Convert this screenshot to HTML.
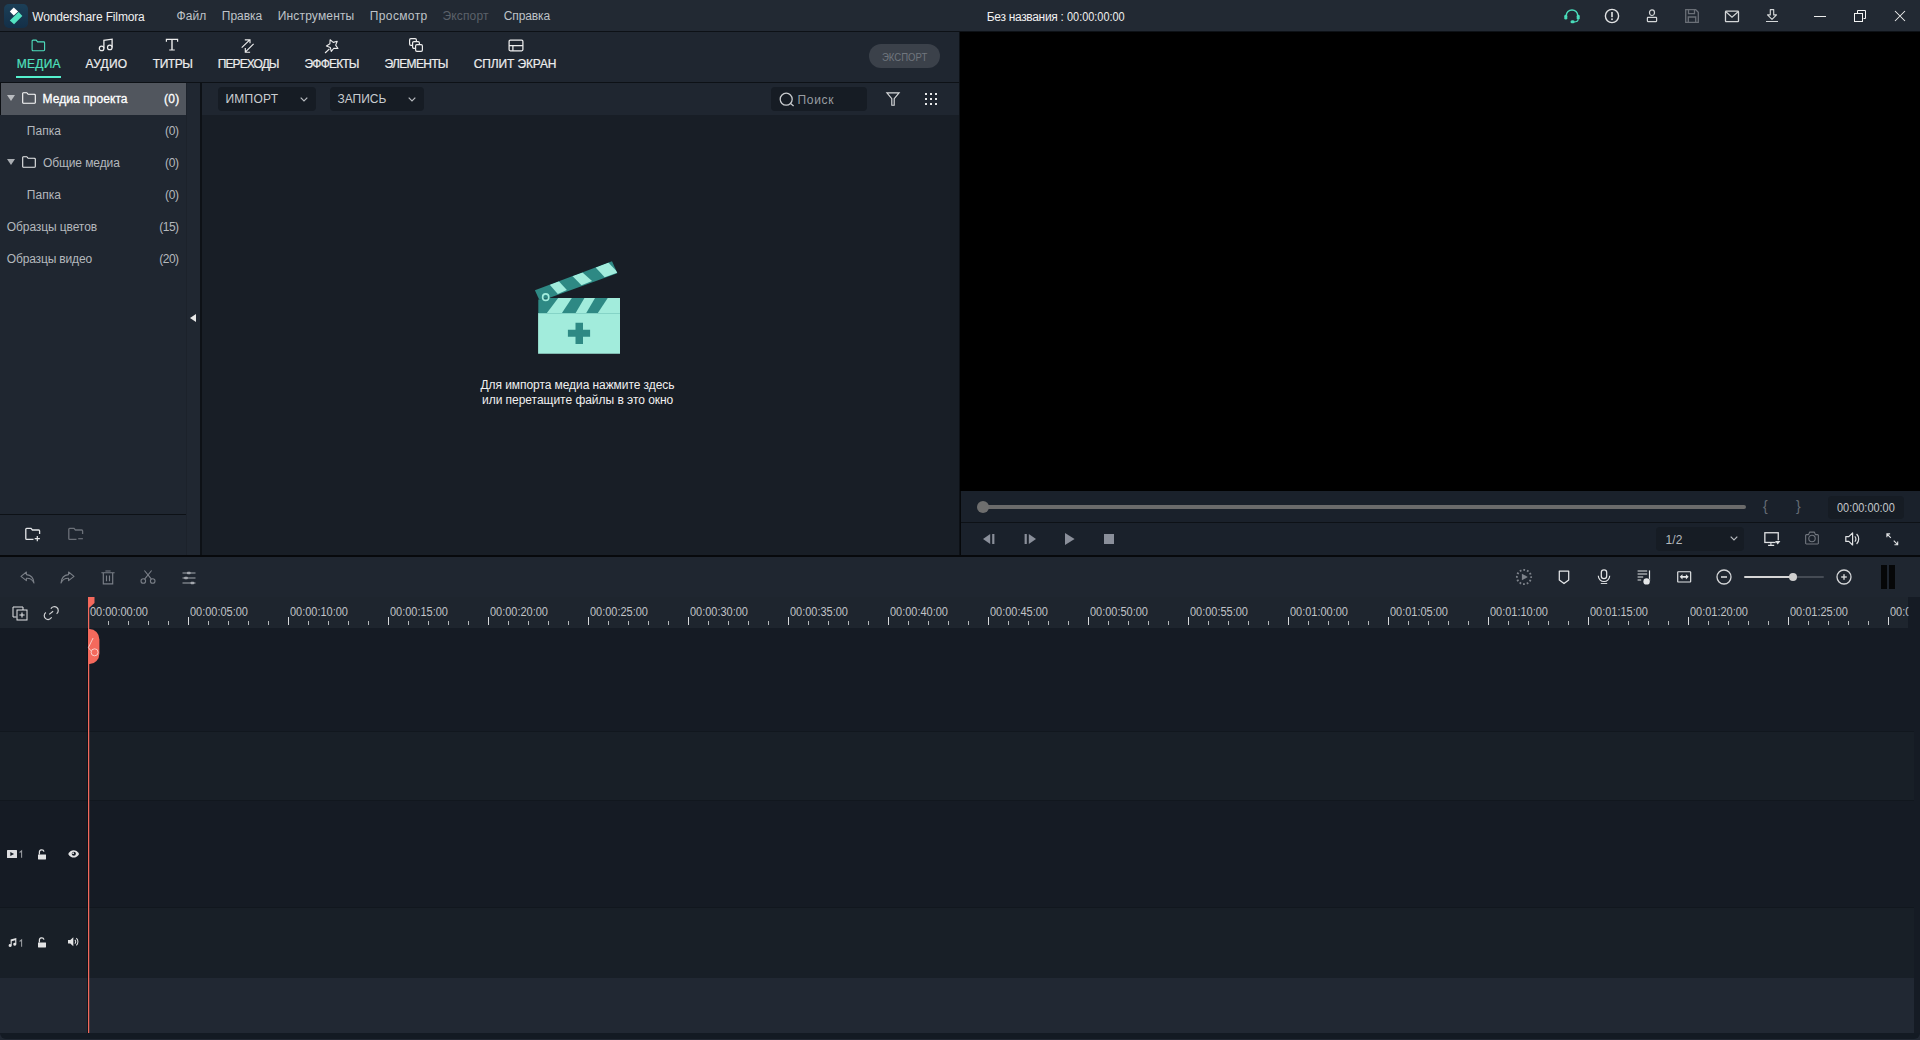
<!DOCTYPE html>
<html><head><meta charset="utf-8"><title>Wondershare Filmora</title>
<style>
html,body{margin:0;padding:0;}
body{width:1920px;height:1040px;overflow:hidden;position:relative;background:#1f2630;font-family:"Liberation Sans",sans-serif;}
.b{position:absolute;}
.ic{position:absolute;overflow:visible;}
.t{position:absolute;white-space:nowrap;line-height:16px;height:16px;}
</style></head><body>
<div class="b" style="left:0px;top:0px;width:1920px;height:31px;background:#222933;"></div>
<div class="b" style="left:0px;top:31px;width:1920px;height:1px;background:#0d1116;"></div>
<svg class="ic" style="left:4px;top:4px" width="24" height="24" viewBox="0 0 24 24"><defs><linearGradient id="lg" x1="0" y1="0" x2="0" y2="1"><stop offset="0" stop-color="#1c3f57"/><stop offset="1" stop-color="#132f48"/></linearGradient></defs><rect width="24" height="24" rx="4.800" fill="url(#lg)"/><path d="M9.750 3.600l4.400 3.800-4.400 4.200-3.950-4.200z" fill="#ffffff"/><path d="M14.600 8l3.750 3.900-8.300 8.300-4.250-3.700z" fill="#53e3c2"/></svg>
<span class="t" id="t0" style="left:32.30px;top:8.84px;font-size:12px;color:#f0f0f0;font-weight:400;letter-spacing:-0.148px;">Wondershare Filmora</span>
<span class="t" id="t1" style="left:176.50px;top:8.24px;font-size:12px;color:#bfc3c8;font-weight:400;letter-spacing:0.061px;">Файл</span>
<span class="t" id="t2" style="left:221.80px;top:8.24px;font-size:12px;color:#bfc3c8;font-weight:400;letter-spacing:-0.029px;">Правка</span>
<span class="t" id="t3" style="left:277.80px;top:8.24px;font-size:12px;color:#bfc3c8;font-weight:400;letter-spacing:0.157px;">Инструменты</span>
<span class="t" id="t4" style="left:369.80px;top:8.24px;font-size:12px;color:#bfc3c8;font-weight:400;letter-spacing:0.370px;">Просмотр</span>
<span class="t" id="t5" style="left:442.50px;top:8.24px;font-size:12px;color:#5b616a;font-weight:400;letter-spacing:0.151px;">Экспорт</span>
<span class="t" id="t6" style="left:503.80px;top:8.24px;font-size:12px;color:#bfc3c8;font-weight:400;letter-spacing:-0.113px;">Справка</span>
<span class="t" id="t7" style="left:986.80px;top:8.84px;font-size:12px;color:#f0f0f0;font-weight:400;letter-spacing:-0.323px;">Без названия :</span>
<span class="t" id="t8" style="left:1066.81px;top:8.74px;font-size:12.3px;color:#f0f0f0;font-weight:400;letter-spacing:0.000px;transform:scaleX(0.8879);transform-origin:0 0;">00:00:00:00</span>
<svg class="ic" style="left:1563.00px;top:8.00px;color:#49dcba;" width="18.00" height="16.00" viewBox="0 0 18 16"><path d="M3.300 9V7.600a5.700 5.700 0 0 1 11.400 0V9" fill="none" stroke="currentColor" stroke-width="1.45"/><rect x="1.300" y="6.800" width="3" height="4.800" rx="1.400" fill="currentColor"/><rect x="13.700" y="6.800" width="3" height="4.800" rx="1.400" fill="currentColor"/><path d="M15.100 11.300c0 1.900-1.600 2.700-4 2.700" fill="none" stroke="currentColor" stroke-width="1.2"/><rect x="7.500" y="12.300" width="4.200" height="3" rx="1.500" fill="currentColor"/></svg>
<svg class="ic" style="left:1604.00px;top:8.00px;color:#e2e3e4;" width="16.00" height="16.00" viewBox="0 0 16 16"><circle cx="8" cy="8" r="6.6" fill="none" stroke="currentColor" stroke-width="1.4"/><rect x="7.2" y="4" width="1.6" height="5.2" fill="currentColor"/><rect x="7.2" y="10.4" width="1.6" height="1.7" fill="currentColor"/></svg>
<svg class="ic" style="left:1646.00px;top:9.00px;color:#d4d6d8;" width="12.00" height="14.00" viewBox="0 0 12 14"><ellipse cx="6" cy="3.700" rx="2.500" ry="2.800" fill="none" stroke="currentColor" stroke-width="1.2"/><rect x="1.400" y="8.400" width="9.200" height="4.200" rx=".5" fill="none" stroke="currentColor" stroke-width="1.2"/></svg>
<svg class="ic" style="left:1684.00px;top:8.00px;color:#6a6f77;" width="16.00" height="16.00" viewBox="0 0 16 16"><path d="M1.7 1.7h10l2.6 2.6v10H1.7z" fill="none" stroke="currentColor" stroke-width="1.3"/><path d="M4.5 1.7v4h6v-4" fill="none" stroke="currentColor" stroke-width="1.3"/><path d="M4.3 14.3V9h7.4v5.3" fill="none" stroke="currentColor" stroke-width="1.3"/></svg>
<svg class="ic" style="left:1724.00px;top:9.70px;color:#d4d6d8;" width="16.00" height="13.00" viewBox="0 0 16 13"><rect x="1.500" y="1.100" width="13" height="10.600" rx=".8" fill="none" stroke="currentColor" stroke-width="1.3"/><path d="M1.900 1.700L8 7.100l6.100-5.400" fill="none" stroke="currentColor" stroke-width="1.2"/></svg>
<svg class="ic" style="left:1765.00px;top:9.00px;color:#d4d6d8;" width="14.00" height="14.00" viewBox="0 0 14 14"><path d="M5.300 .6h3.400v5.300h2.800L7 10.300 2.500 5.900h2.800z" fill="none" stroke="currentColor" stroke-width="1.15" stroke-linejoin="round"/><rect x="1" y="12" width="12" height="1" fill="currentColor"/></svg>
<svg class="ic" style="left:1814.00px;top:16.00px;color:#ececec;" width="12.00" height="1.00" viewBox="0 0 12 1"><rect x="0" y="0" width="12" height="1" fill="currentColor"/></svg>
<svg class="ic" style="left:1854.00px;top:10.00px;color:#f4f4f4;" width="13.00" height="13.00" viewBox="0 0 13 13"><path d="M3.500 3V.5h8v8H9.500" fill="none" stroke="currentColor" stroke-width="1"/><rect x=".5" y="3.500" width="8" height="8" fill="none" stroke="currentColor" stroke-width="1"/></svg>
<svg class="ic" style="left:1894.00px;top:10.00px;color:#f0f0f0;" width="12.00" height="12.00" viewBox="0 0 12 12"><path d="M1 1l10 10M11 1L1 11" fill="none" stroke="currentColor" stroke-width="1.05"/></svg>
<div class="b" style="left:0px;top:32px;width:960px;height:50px;background:#1f2630;"></div>
<div class="b" style="left:0px;top:82px;width:960px;height:1px;background:#0d1116;"></div>
<svg class="ic" style="left:30.74px;top:38.56px;color:#4fe0bf;" width="14.72" height="12.88" viewBox="0 0 16 14"><path d="M1.2 2.2a1 1 0 0 1 1-1h3.4l1.6 1.9h6.6a1 1 0 0 1 1 1v7.7a1 1 0 0 1-1 1H2.2a1 1 0 0 1-1-1z" fill="none" stroke="currentColor" stroke-width="1.2"/></svg>
<svg class="ic" style="left:98.30px;top:38.40px;color:#ededed;" width="16.00" height="14.00" viewBox="0 0 16 14"><circle cx="3.600" cy="10.400" r="2.300" fill="none" stroke="currentColor" stroke-width="1.2"/><circle cx="11.800" cy="9.400" r="2.300" fill="none" stroke="currentColor" stroke-width="1.2"/><path d="M5.900 10.400V2.300L14.100 1.200V9.400" fill="none" stroke="currentColor" stroke-width="1.3"/></svg>
<svg class="ic" style="left:165.00px;top:38.10px;color:#ededed;" width="14.00" height="13.00" viewBox="0 0 14 13"><path d="M.8.8h12.4v3h-1.2V2H7.7v9.4h2.1v1H4.2v-1h2.1V2H2v1.8H.8z" fill="currentColor"/></svg>
<svg class="ic" style="left:241.00px;top:38.50px;color:#ededed;" width="14.00" height="14.00" viewBox="0 0 14 14"><path d="M.7 8.6L8.8 .8M3.8 .9H9V4.3" fill="none" stroke="currentColor" stroke-width="1.15"/><path d="M12.6 4.9L4.3 13.2M4.3 8.9V13.2H9.1" fill="none" stroke="currentColor" stroke-width="1.15"/></svg>
<svg class="ic" style="left:324.00px;top:37.50px;color:#ededed;" width="16.00" height="16.00" viewBox="0 0 16 16"><path d="M6.11 1.72L9.26 4.37L13.23 3.28L11.68 7.09L13.95 10.53L9.85 10.24L7.28 13.46L6.29 9.46L2.43 8.02L5.92 5.84z" fill="none" stroke="currentColor" stroke-width="1.1" stroke-linejoin="round"/><path d="M5.4 10.9L1.1 15" fill="none" stroke="currentColor" stroke-width="1.2"/></svg>
<svg class="ic" style="left:409.00px;top:38.00px;color:#ededed;" width="14.00" height="14.00" viewBox="0 0 14 14"><rect x=".6" y=".6" width="6.800" height="6.800" rx="1.300" fill="none" stroke="currentColor" stroke-width="1.2"/><rect x="3.600" y="3.600" width="6.800" height="6.800" rx="1.300" fill="#1f2630" stroke="currentColor" stroke-width="1.2"/><rect x="6.600" y="6.600" width="6.800" height="6.800" rx="1.300" fill="#1f2630" stroke="currentColor" stroke-width="1.2"/></svg>
<svg class="ic" style="left:507.50px;top:38.50px;color:#ededed;" width="16.00" height="13.00" viewBox="0 0 16 13"><rect x="1.100" y="1.200" width="13.800" height="10.600" rx="1.200" fill="none" stroke="currentColor" stroke-width="1.25"/><path d="M1.100 6.700h13.800M4.900 6.700v5.100" fill="none" stroke="currentColor" stroke-width="1.25"/></svg>
<span class="t" id="t9" style="left:16.80px;top:55.84px;font-size:12px;color:#4fe0bf;font-weight:400;letter-spacing:0.234px;-webkit-text-stroke:0.2px #4fe0bf;">МЕДИА</span>
<span class="t" id="t10" style="left:85.50px;top:55.84px;font-size:12px;color:#ededed;font-weight:400;letter-spacing:0.261px;-webkit-text-stroke:0.2px #ededed;">АУДИО</span>
<span class="t" id="t11" style="left:152.80px;top:55.84px;font-size:12px;color:#ededed;font-weight:400;letter-spacing:-0.480px;-webkit-text-stroke:0.2px #ededed;">ТИТРЫ</span>
<span class="t" id="t12" style="left:217.80px;top:55.84px;font-size:12px;color:#ededed;font-weight:400;letter-spacing:-0.909px;-webkit-text-stroke:0.2px #ededed;">ПЕРЕХОДЫ</span>
<span class="t" id="t13" style="left:304.50px;top:55.84px;font-size:12px;color:#ededed;font-weight:400;letter-spacing:-0.805px;-webkit-text-stroke:0.2px #ededed;">ЭФФЕКТЫ</span>
<span class="t" id="t14" style="left:384.50px;top:55.84px;font-size:12px;color:#ededed;font-weight:400;letter-spacing:-0.676px;-webkit-text-stroke:0.2px #ededed;">ЭЛЕМЕНТЫ</span>
<span class="t" id="t15" style="left:473.80px;top:55.84px;font-size:12px;color:#ededed;font-weight:400;letter-spacing:-0.125px;-webkit-text-stroke:0.2px #ededed;">СПЛИТ ЭКРАН</span>
<div class="b" style="left:16px;top:76px;width:45px;height:2px;background:#55f0ce;"></div>
<div class="b" style="left:869px;top:44px;width:71px;height:24px;background:#3b414a;border-radius:12px;"></div>
<span class="t" id="t16" style="left:881.87px;top:49.67px;font-size:10.2px;color:#70767e;font-weight:400;letter-spacing:0.000px;transform:scaleX(0.9389);transform-origin:0 0;">ЭКСПОРТ</span>
<div class="b" style="left:0px;top:83px;width:186px;height:472px;background:#1f2630;"></div>
<div class="b" style="left:1px;top:83px;width:185px;height:32px;background:#51565e;"></div>
<div class="b" style="left:0px;top:83px;width:1px;height:32px;background:#0c0f13;"></div>
<div class="b" style="left:186px;top:83px;width:14px;height:472px;background:#202731;"></div>
<div class="b" style="left:186px;top:83px;width:1px;height:472px;background:#1c222b;"></div>
<div class="b" style="left:200px;top:83px;width:2px;height:472px;background:#0d1116;"></div>
<div class="b" style="left:0px;top:514px;width:186px;height:1px;background:#0d1116;"></div>
<span class="t" id="t17" style="left:42.50px;top:90.84px;font-size:12px;color:#ffffff;font-weight:400;letter-spacing:0.066px;-webkit-text-stroke:0.3px #ffffff;">Медиа проекта</span>
<span class="t" id="t18" style="left:163.90px;top:90.84px;font-size:12px;color:#ffffff;font-weight:400;letter-spacing:0.364px;-webkit-text-stroke:0.3px #ffffff;">(0)</span>
<svg class="ic" style="left:7.00px;top:94.50px;color:#b9bcc0;" width="8.00" height="6.00" viewBox="0 0 8 6"><path d="M0 0h8L4 6z" fill="currentColor"/></svg>
<svg class="ic" style="left:22.00px;top:92.00px;color:#ffffff;" width="14.00" height="12.00" viewBox="0 0 14 12"><path d="M.7 1.6a.9.9 0 0 1 .9-.9h3.2l1.3 1.6h6.3a.9.9 0 0 1 .9.9v7.2a.9.9 0 0 1-.9.9H1.6a.9.9 0 0 1-.9-.9z" fill="none" stroke="currentColor" stroke-width="1.1"/></svg>
<span class="t" id="t19" style="left:26.80px;top:122.84px;font-size:12px;color:#b4b8bd;font-weight:400;letter-spacing:0.054px;">Папка</span>
<span class="t" id="t20" style="left:164.90px;top:122.84px;font-size:12px;color:#b4b8bd;font-weight:400;letter-spacing:-0.236px;">(0)</span>
<span class="t" id="t21" style="left:42.90px;top:154.84px;font-size:12px;color:#b4b8bd;font-weight:400;letter-spacing:-0.084px;">Общие медиа</span>
<span class="t" id="t22" style="left:164.90px;top:154.84px;font-size:12px;color:#b4b8bd;font-weight:400;letter-spacing:-0.236px;">(0)</span>
<svg class="ic" style="left:7.00px;top:158.50px;color:#a9adb2;" width="8.00" height="6.00" viewBox="0 0 8 6"><path d="M0 0h8L4 6z" fill="currentColor"/></svg>
<svg class="ic" style="left:22.00px;top:156.00px;color:#eceded;" width="14.00" height="12.00" viewBox="0 0 14 12"><path d="M.7 1.6a.9.9 0 0 1 .9-.9h3.2l1.3 1.6h6.3a.9.9 0 0 1 .9.9v7.2a.9.9 0 0 1-.9.9H1.6a.9.9 0 0 1-.9-.9z" fill="none" stroke="currentColor" stroke-width="1.1"/></svg>
<span class="t" id="t23" style="left:26.80px;top:186.84px;font-size:12px;color:#b4b8bd;font-weight:400;letter-spacing:0.054px;">Папка</span>
<span class="t" id="t24" style="left:164.90px;top:186.84px;font-size:12px;color:#b4b8bd;font-weight:400;letter-spacing:-0.236px;">(0)</span>
<span class="t" id="t25" style="left:6.80px;top:218.84px;font-size:12px;color:#b4b8bd;font-weight:400;letter-spacing:-0.097px;">Образцы цветов</span>
<span class="t" id="t26" style="left:159.20px;top:218.84px;font-size:12px;color:#b4b8bd;font-weight:400;letter-spacing:-0.481px;">(15)</span>
<span class="t" id="t27" style="left:6.80px;top:250.84px;font-size:12px;color:#b4b8bd;font-weight:400;letter-spacing:-0.157px;">Образцы видео</span>
<span class="t" id="t28" style="left:159.20px;top:250.84px;font-size:12px;color:#b4b8bd;font-weight:400;letter-spacing:-0.481px;">(20)</span>
<svg class="ic" style="left:189.80px;top:314.00px;color:#e8e8e8;" width="6.00" height="8.00" viewBox="0 0 6 8"><path d="M6 0v8L0 4z" fill="currentColor"/></svg>
<svg class="ic" style="left:25.00px;top:527.30px;color:#e4e6e8;" width="16.00" height="14.00" viewBox="0 0 16 14"><path d="M14.600 7V3.900a.9.900 0 0 0-.9-.9H7.400L6 1.300H1.700a.9.900 0 0 0-.9.900v9.200a.9.900 0 0 0 .9.900h6.800" fill="none" stroke="currentColor" stroke-width="1.3"/><path d="M12.300 9.100v5.200M9.700 11.700h5.200" fill="none" stroke="currentColor" stroke-width="1.2"/></svg>
<svg class="ic" style="left:68.00px;top:527.30px;color:#6b7078;" width="16.00" height="14.00" viewBox="0 0 16 14"><path d="M14.600 7V3.900a.9.900 0 0 0-.9-.9H7.400L6 1.300H1.700a.9.900 0 0 0-.9.900v9.200a.9.900 0 0 0 .9.900h6.800" fill="none" stroke="currentColor" stroke-width="1.3"/><path d="M10.200 11.700h4.700" fill="none" stroke="currentColor" stroke-width="1.2"/></svg>
<div class="b" style="left:202px;top:83px;width:757px;height:32px;background:#1f2630;"></div>
<div class="b" style="left:202px;top:115px;width:757px;height:440px;background:#181e26;"></div>
<div class="b" style="left:959px;top:32px;width:1px;height:524px;background:#0d1116;"></div>
<div class="b" style="left:218px;top:87px;width:98px;height:24px;background:#161c24;border-radius:4px;"></div>
<div class="b" style="left:330px;top:87px;width:94px;height:24px;background:#161c24;border-radius:4px;"></div>
<span class="t" id="t29" style="left:225.50px;top:91.14px;font-size:12px;color:#c9cdd1;font-weight:400;letter-spacing:0.225px;">ИМПОРТ</span>
<span class="t" id="t30" style="left:337.50px;top:91.14px;font-size:12px;color:#c9cdd1;font-weight:400;letter-spacing:-0.024px;">ЗАПИСЬ</span>
<svg class="ic" style="left:299.70px;top:96.70px;color:#b8bcc0;" width="8.00" height="5.00" viewBox="0 0 8 5"><path d="M.7.7L4 4l3.3-3.3" fill="none" stroke="currentColor" stroke-width="1.2"/></svg>
<svg class="ic" style="left:408.00px;top:96.70px;color:#b8bcc0;" width="8.00" height="5.00" viewBox="0 0 8 5"><path d="M.7.7L4 4l3.3-3.3" fill="none" stroke="currentColor" stroke-width="1.2"/></svg>
<div class="b" style="left:771px;top:87px;width:96px;height:24px;background:#161c24;border-radius:4px;"></div>
<svg class="ic" style="left:779.40px;top:91.50px;color:#c8cbce;" width="16.00" height="16.00" viewBox="0 0 16 16"><circle cx="7.2" cy="7.2" r="6" fill="none" stroke="currentColor" stroke-width="1.3"/><path d="M11.6 11.6l3 2.4" fill="none" stroke="currentColor" stroke-width="1.3"/></svg>
<span class="t" id="t31" style="left:797.50px;top:92.04px;font-size:12px;color:#989ca2;font-weight:400;letter-spacing:0.684px;">Поиск</span>
<svg class="ic" style="left:886.00px;top:92.00px;color:#d8dadc;" width="14.00" height="14.00" viewBox="0 0 14 14"><path d="M.9.900h12.200L8.200 6.700v6.500H5.800V6.700z" fill="none" stroke="currentColor" stroke-width="1.15" stroke-linejoin="miter"/></svg>
<svg class="ic" style="left:925.00px;top:93.00px;color:#e6e7e8;" width="12.00" height="12.00" viewBox="0 0 12 12"><rect x="0" y="0" width="2" height="2" fill="currentColor"/><rect x="0" y="5" width="2" height="2" fill="currentColor"/><rect x="0" y="10" width="2" height="2" fill="currentColor"/><rect x="5" y="0" width="2" height="2" fill="currentColor"/><rect x="5" y="5" width="2" height="2" fill="currentColor"/><rect x="5" y="10" width="2" height="2" fill="currentColor"/><rect x="10" y="0" width="2" height="2" fill="currentColor"/><rect x="10" y="5" width="2" height="2" fill="currentColor"/><rect x="10" y="10" width="2" height="2" fill="currentColor"/></svg>
<svg class="ic" style="left:530px;top:258px" width="100" height="100" viewBox="530 258 100 100"><defs><clipPath id="cb"><path d="M538.300 298h81.700v15.200h-81.700z"/></clipPath><clipPath id="ct"><path d="M534.900 290.300L612 261.300l5.400 11.900-67.700 24.600-10.600 1.800z"/></clipPath></defs><path d="M538.100 313h81.900v40.700h-81.900z" fill="#a2ecdc"/><path d="M538.300 299.500l11-1.600h70.700v15.300h-81.700z" fill="#2e8984"/><g clip-path="url(#cb)" fill="#a2ecdc"><path d="M546.700 313.200l11.600-15.300h13.600l-10.100 15.300z"/><path d="M575.500 313.200l9-15.300h10.600l-9 15.300z"/><path d="M597.700 313.200l10.100-15.300h13v15.300z"/></g><path d="M534.900 290.300L612 261.300l5.400 11.900-67.700 24.600-10.600 1.800z" fill="#2e8984"/><g clip-path="url(#ct)" fill="#a2ecdc"><path d="M549.700 284.700l9.100-3.500 8.100 8.800-9.100 3.900z"/><path d="M572.400 276.100l10.100-3.700 9.600 8.600-10.600 4.300z"/><path d="M595.600 267.400l12.700-4.800 9.600 10-13.200 4.600z"/></g><ellipse cx="545.700" cy="297.200" rx="3.100" ry="3.300" fill="none" stroke="#a2ecdc" stroke-width="1.600"/><path d="M575.500 322.800h7.500v6.900h7.100v7h-7.100v7.300h-7.500v-7.300h-7.600v-7h7.600z" fill="#2e8984"/></svg>
<span class="t" id="t32" style="left:480.50px;top:376.84px;font-size:12px;color:#f0f0f0;font-weight:400;letter-spacing:-0.069px;">Для импорта медиа нажмите здесь</span>
<span class="t" id="t33" style="left:482.00px;top:391.84px;font-size:12px;color:#f0f0f0;font-weight:400;letter-spacing:-0.031px;">или перетащите файлы в это окно</span>
<div class="b" style="left:960px;top:32px;width:960px;height:459px;background:#000000;"></div>
<div class="b" style="left:960px;top:491px;width:1px;height:65px;background:#06080a;"></div>
<div class="b" style="left:961px;top:491px;width:959px;height:31px;background:#1a212b;"></div>
<div class="b" style="left:961px;top:522px;width:959px;height:1px;background:#0d1116;"></div>
<div class="b" style="left:961px;top:523px;width:959px;height:32px;background:#1a212b;"></div>
<div class="b" style="left:0px;top:555px;width:1920px;height:2px;background:#07090c;"></div>
<div class="b" style="left:983px;top:505px;width:763px;height:4px;background:#6b6b6b;border-radius:2px;"></div>
<div class="b" style="left:977px;top:501px;width:12px;height:12px;background:#6e6e6e;border-radius:6px;"></div>
<span class="t" id="t34" style="left:1763.00px;top:497.95px;font-size:14px;color:#666c74;font-weight:400;letter-spacing:0.000px;">{</span>
<span class="t" id="t35" style="left:1796.00px;top:497.95px;font-size:14px;color:#666c74;font-weight:400;letter-spacing:0.000px;">}</span>
<div class="b" style="left:1828px;top:496px;width:76px;height:23px;background:#161c24;border-radius:4px;"></div>
<span class="t" id="t36" style="left:1836.71px;top:499.67px;font-size:12.5px;color:#c4c7cb;font-weight:400;letter-spacing:0.000px;transform:scaleX(0.8749);transform-origin:0 0;">00:00:00:00</span>
<svg class="ic" style="left:983.20px;top:534.00px;color:#8a8f9a;" width="12.00" height="10.00" viewBox="0 0 12 10"><path d="M7.2 0v10L0 5z" fill="currentColor"/><rect x="9.2" y="0" width="2.2" height="10" fill="currentColor"/></svg>
<svg class="ic" style="left:1024.20px;top:534.00px;color:#8a8f9a;" width="12.00" height="10.00" viewBox="0 0 12 10"><path d="M4.8 0v10L12 5z" fill="currentColor"/><rect x=".6" y="0" width="2.2" height="10" fill="currentColor"/></svg>
<svg class="ic" style="left:1065.20px;top:533.00px;color:#8a8f9a;" width="10.00" height="12.00" viewBox="0 0 10 12"><path d="M0 0v12l9.6-6z" fill="currentColor"/></svg>
<svg class="ic" style="left:1104.00px;top:534.00px;color:#8a8f9a;" width="10.00" height="10.00" viewBox="0 0 10 10"><rect width="10" height="10" fill="currentColor"/></svg>
<div class="b" style="left:1656px;top:527px;width:88px;height:24px;background:#161c24;border-radius:4px;"></div>
<span class="t" id="t37" style="left:1665.50px;top:531.84px;font-size:12px;color:#b4b8bd;font-weight:400;letter-spacing:0.156px;">1/2</span>
<svg class="ic" style="left:1729.80px;top:536.40px;color:#b8bcc0;" width="8.00" height="5.00" viewBox="0 0 8 5"><path d="M.7.7L4 4l3.3-3.3" fill="none" stroke="currentColor" stroke-width="1.2"/></svg>
<svg class="ic" style="left:1763.00px;top:532.00px;color:#e0e2e4;" width="18.00" height="14.00" viewBox="0 0 18 14"><rect x="1.850" y=".75" width="13.400" height="9.700" fill="none" stroke="currentColor" stroke-width="1.3"/><path d="M7.900 10.500v2.900M5.100 13.400h6.100" fill="none" stroke="currentColor" stroke-width="1.1"/><path d="M10.900 8.300h7.600l-3.800 5z" fill="#1a212b"/><path d="M12 9.100h5.400l-2.700 3.500z" fill="currentColor"/></svg>
<svg class="ic" style="left:1804.00px;top:531.00px;color:#72777f;" width="16.00" height="14.00" viewBox="0 0 16 14"><path d="M1.650 4.400a.8.800 0 0 1 .8-.8H4.600L5.600 1.150h4.800L11.400 3.600h2.150a.8.800 0 0 1 .8.800v7.750a.8.800 0 0 1-.8.800H2.450a.8.800 0 0 1-.8-.8z" fill="none" stroke="currentColor" stroke-width="1.1" stroke-linejoin="round"/><circle cx="8" cy="7.500" r="3.200" fill="none" stroke="currentColor" stroke-width="1.1"/></svg>
<svg class="ic" style="left:1844.60px;top:532.20px;color:#e0e2e4;" width="16.00" height="14.00" viewBox="0 0 16 14"><path d="M.8 4.6h3L7.6 1v12L3.8 9.4h-3z" fill="none" stroke="currentColor" stroke-width="1.2" stroke-linejoin="round"/><path d="M9.8 4.4a3.6 3.6 0 0 1 0 5.2M11.6 2a7 7 0 0 1 0 10" fill="none" stroke="currentColor" stroke-width="1.2"/></svg>
<svg class="ic" style="left:1885.50px;top:532.70px;color:#e0e2e4;" width="12.60" height="12.60" viewBox="0 0 14 14"><path d="M1 4.6V1h3.6M1 1l4.4 4.4M13 9.4V13H9.4M13 13L8.6 8.600" fill="none" stroke="currentColor" stroke-width="1.2"/></svg>
<div class="b" style="left:0px;top:557px;width:1920px;height:40px;background:#1f2630;"></div>
<svg class="ic" style="left:20.00px;top:570.50px;color:#7a7f87;" width="16.00" height="13.00" viewBox="0 0 16 13"><path d="M6.4 1L1 5.4l5.4 4.2V7.2c3.6-.2 6 1.200 7.600 4.800C13.6 7 11 4 6.4 3.600z" fill="none" stroke="currentColor" stroke-width="1.1" stroke-linejoin="round"/></svg>
<svg class="ic" style="left:59.00px;top:570.50px;color:#7a7f87;" width="16.00" height="13.00" viewBox="0 0 16 13"><path d="M9.600 1L15 5.400l-5.400 4.200V7.200c-3.600-.2-6 1.200-7.600 4.800C2.400 7 5 4 9.600 3.600z" fill="none" stroke="currentColor" stroke-width="1.1" stroke-linejoin="round"/></svg>
<svg class="ic" style="left:101.00px;top:569.50px;color:#7a7f87;" width="14.00" height="15.00" viewBox="0 0 14 15"><path d="M4.400 1h5.200M.4 2.700h13.200M2.300 3.200V13.900h9.400V3.200M5.500 5.600v5.600M8.500 5.600v5.600" fill="none" stroke="currentColor" stroke-width="1.15"/></svg>
<svg class="ic" style="left:140.00px;top:570.00px;color:#7a7f87;" width="16.00" height="14.00" viewBox="0 0 16 14"><circle cx="3.300" cy="11" r="2.300" fill="none" stroke="currentColor" stroke-width="1.1"/><circle cx="12.700" cy="11" r="2.300" fill="none" stroke="currentColor" stroke-width="1.1"/><path d="M4.600 9.200L11.600.5M11.400 9.200L4.400.5" fill="none" stroke="currentColor" stroke-width="1.1"/></svg>
<svg class="ic" style="left:181.50px;top:570.50px;color:#a3a7ad;" width="14.00" height="14.00" viewBox="0 0 14 14"><path d="M.5 2h13M.5 7h13M.5 12h13" fill="none" stroke="currentColor" stroke-width="1.1"/><rect x="5" y=".7" width="3.600" height="2.600" rx=".8" fill="currentColor"/><rect x="2.200" y="5.700" width="3.600" height="2.600" rx=".8" fill="currentColor"/><rect x="8.600" y="10.700" width="3.600" height="2.600" rx=".8" fill="currentColor"/></svg>
<svg class="ic" style="left:1515.00px;top:568.00px;color:#7d828a;" width="18.00" height="18.00" viewBox="0 0 18 18"><circle cx="9" cy="9" r="7.100" fill="none" stroke="currentColor" stroke-width="1.900" stroke-dasharray="1.800 1.9176" stroke-dashoffset=".9"/><path d="M6.900 5.700v6.600L12.800 9z" fill="currentColor"/></svg>
<svg class="ic" style="left:1558.00px;top:569.50px;color:#e4e6e8;" width="12.00" height="15.00" viewBox="0 0 12 15"><path d="M1.300 1.100h9.400v8.800L6 13.500 1.300 9.900z" fill="none" stroke="currentColor" stroke-width="1.250" stroke-linejoin="round"/></svg>
<svg class="ic" style="left:1597.00px;top:569.00px;color:#e4e6e8;" width="14.00" height="16.00" viewBox="0 0 14 16"><rect x="4.300" y=".9" width="5.400" height="8.800" rx="2.700" fill="none" stroke="currentColor" stroke-width="1.250"/><path d="M1.300 6.800a5.700 5.700 0 0 0 11.400 0" fill="none" stroke="currentColor" stroke-width="1.150"/><rect x="3.800" y="14" width="6.400" height=".9" fill="currentColor"/></svg>
<svg class="ic" style="left:1637.00px;top:569.50px;color:#e4e6e8;" width="14.00" height="15.00" viewBox="0 0 14 15"><path d="M.6 1h9.600M.6 4h9.600M.6 7h5.600M.6 10h3.600" fill="none" stroke="currentColor" stroke-width="1"/><path d="M12.500.4v10.600" fill="none" stroke="currentColor" stroke-width="1.200"/><circle cx="9.300" cy="11.300" r="3.700" fill="#1f2630"/><circle cx="9.600" cy="11.400" r="3.200" fill="currentColor"/></svg>
<svg class="ic" style="left:1676.80px;top:571.15px;color:#e4e6e8;" width="14.40" height="11.70" viewBox="0 0 16 13"><rect x=".8" y=".8" width="14.400" height="11.400" rx=".6" fill="none" stroke="currentColor" stroke-width="1.300"/><path d="M3 6.500l3.100-2.900v1.900h3.800v-1.900l3.100 2.900-3.100 2.900V7.500h-3.800v1.900z" fill="currentColor"/></svg>
<svg class="ic" style="left:1716.00px;top:569.00px;color:#d4d6d8;" width="16.00" height="16.00" viewBox="0 0 16 16"><circle cx="8" cy="8" r="7" fill="none" stroke="currentColor" stroke-width="1.300"/><rect x="5" y="7.200" width="6" height="1.600" fill="currentColor"/></svg>
<div class="b" style="left:1744px;top:576px;width:50px;height:2px;background:#d6d6d6;border-radius:1px;"></div>
<div class="b" style="left:1794px;top:576px;width:30px;height:2px;background:#454b54;border-radius:1px;"></div>
<div class="b" style="left:1789px;top:573px;width:8px;height:8px;background:#cfcfcf;border-radius:4px;"></div>
<svg class="ic" style="left:1836.00px;top:569.00px;color:#d4d6d8;" width="16.00" height="16.00" viewBox="0 0 16 16"><circle cx="8" cy="8" r="7" fill="none" stroke="currentColor" stroke-width="1.300"/><rect x="5.200" y="7.300" width="5.600" height="1.400" fill="currentColor"/><rect x="7.300" y="5.200" width="1.400" height="5.600" fill="currentColor"/></svg>
<div class="b" style="left:1881px;top:565px;width:6px;height:24px;background:#060708;"></div>
<div class="b" style="left:1889px;top:565px;width:6px;height:24px;background:#060708;"></div>
<div class="b" style="left:0px;top:597px;width:1908px;height:31px;background:#1e252e;"></div>
<div class="b" style="left:1908px;top:597px;width:12px;height:31px;background:#151b24;"></div>
<svg class="ic" style="left:11.50px;top:605.50px;color:#e4e6e8;" width="16.00" height="15.00" viewBox="0 0 16 15"><path d="M4.500 11H1V1h10v3" fill="none" stroke="currentColor" stroke-width="1"/><rect x="5" y="4" width="10" height="10" fill="none" stroke="currentColor" stroke-width="1"/><path d="M10 6.400v5.200M7.400 9h5.200" fill="none" stroke="currentColor" stroke-width="1.1"/></svg>
<svg class="ic" style="left:43.00px;top:605.00px;color:#cfd1d3;" width="16.00" height="16.00" viewBox="0 0 16 16"><path d="M7.91 3.87A3.85 3.85 0 1 1 13.61 8.65" fill="none" stroke="currentColor" stroke-width="1.2"/><path d="M8.59 12.33A3.85 3.85 0 1 1 2.89 7.55" fill="none" stroke="currentColor" stroke-width="1.2"/><path d="M6.200 9.400L10.100 6.200" fill="none" stroke="currentColor" stroke-width="1.2"/></svg>
<svg class="ic" style="left:0;top:597px" width="1908" height="31" viewBox="0 0 1908 31"><rect x="88" y="20" width="1" height="8" fill="#d8dadc"/><rect x="108" y="24" width="1" height="4" fill="#b4b7ba"/><rect x="128" y="24" width="1" height="4" fill="#b4b7ba"/><rect x="148" y="24" width="1" height="4" fill="#b4b7ba"/><rect x="168" y="24" width="1" height="4" fill="#b4b7ba"/><rect x="188" y="20" width="1" height="8" fill="#d8dadc"/><rect x="208" y="24" width="1" height="4" fill="#b4b7ba"/><rect x="228" y="24" width="1" height="4" fill="#b4b7ba"/><rect x="248" y="24" width="1" height="4" fill="#b4b7ba"/><rect x="268" y="24" width="1" height="4" fill="#b4b7ba"/><rect x="288" y="20" width="1" height="8" fill="#d8dadc"/><rect x="308" y="24" width="1" height="4" fill="#b4b7ba"/><rect x="328" y="24" width="1" height="4" fill="#b4b7ba"/><rect x="348" y="24" width="1" height="4" fill="#b4b7ba"/><rect x="368" y="24" width="1" height="4" fill="#b4b7ba"/><rect x="388" y="20" width="1" height="8" fill="#d8dadc"/><rect x="408" y="24" width="1" height="4" fill="#b4b7ba"/><rect x="428" y="24" width="1" height="4" fill="#b4b7ba"/><rect x="448" y="24" width="1" height="4" fill="#b4b7ba"/><rect x="468" y="24" width="1" height="4" fill="#b4b7ba"/><rect x="488" y="20" width="1" height="8" fill="#d8dadc"/><rect x="508" y="24" width="1" height="4" fill="#b4b7ba"/><rect x="528" y="24" width="1" height="4" fill="#b4b7ba"/><rect x="548" y="24" width="1" height="4" fill="#b4b7ba"/><rect x="568" y="24" width="1" height="4" fill="#b4b7ba"/><rect x="588" y="20" width="1" height="8" fill="#d8dadc"/><rect x="608" y="24" width="1" height="4" fill="#b4b7ba"/><rect x="628" y="24" width="1" height="4" fill="#b4b7ba"/><rect x="648" y="24" width="1" height="4" fill="#b4b7ba"/><rect x="668" y="24" width="1" height="4" fill="#b4b7ba"/><rect x="688" y="20" width="1" height="8" fill="#d8dadc"/><rect x="708" y="24" width="1" height="4" fill="#b4b7ba"/><rect x="728" y="24" width="1" height="4" fill="#b4b7ba"/><rect x="748" y="24" width="1" height="4" fill="#b4b7ba"/><rect x="768" y="24" width="1" height="4" fill="#b4b7ba"/><rect x="788" y="20" width="1" height="8" fill="#d8dadc"/><rect x="808" y="24" width="1" height="4" fill="#b4b7ba"/><rect x="828" y="24" width="1" height="4" fill="#b4b7ba"/><rect x="848" y="24" width="1" height="4" fill="#b4b7ba"/><rect x="868" y="24" width="1" height="4" fill="#b4b7ba"/><rect x="888" y="20" width="1" height="8" fill="#d8dadc"/><rect x="908" y="24" width="1" height="4" fill="#b4b7ba"/><rect x="928" y="24" width="1" height="4" fill="#b4b7ba"/><rect x="948" y="24" width="1" height="4" fill="#b4b7ba"/><rect x="968" y="24" width="1" height="4" fill="#b4b7ba"/><rect x="988" y="20" width="1" height="8" fill="#d8dadc"/><rect x="1008" y="24" width="1" height="4" fill="#b4b7ba"/><rect x="1028" y="24" width="1" height="4" fill="#b4b7ba"/><rect x="1048" y="24" width="1" height="4" fill="#b4b7ba"/><rect x="1068" y="24" width="1" height="4" fill="#b4b7ba"/><rect x="1088" y="20" width="1" height="8" fill="#d8dadc"/><rect x="1108" y="24" width="1" height="4" fill="#b4b7ba"/><rect x="1128" y="24" width="1" height="4" fill="#b4b7ba"/><rect x="1148" y="24" width="1" height="4" fill="#b4b7ba"/><rect x="1168" y="24" width="1" height="4" fill="#b4b7ba"/><rect x="1188" y="20" width="1" height="8" fill="#d8dadc"/><rect x="1208" y="24" width="1" height="4" fill="#b4b7ba"/><rect x="1228" y="24" width="1" height="4" fill="#b4b7ba"/><rect x="1248" y="24" width="1" height="4" fill="#b4b7ba"/><rect x="1268" y="24" width="1" height="4" fill="#b4b7ba"/><rect x="1288" y="20" width="1" height="8" fill="#d8dadc"/><rect x="1308" y="24" width="1" height="4" fill="#b4b7ba"/><rect x="1328" y="24" width="1" height="4" fill="#b4b7ba"/><rect x="1348" y="24" width="1" height="4" fill="#b4b7ba"/><rect x="1368" y="24" width="1" height="4" fill="#b4b7ba"/><rect x="1388" y="20" width="1" height="8" fill="#d8dadc"/><rect x="1408" y="24" width="1" height="4" fill="#b4b7ba"/><rect x="1428" y="24" width="1" height="4" fill="#b4b7ba"/><rect x="1448" y="24" width="1" height="4" fill="#b4b7ba"/><rect x="1468" y="24" width="1" height="4" fill="#b4b7ba"/><rect x="1488" y="20" width="1" height="8" fill="#d8dadc"/><rect x="1508" y="24" width="1" height="4" fill="#b4b7ba"/><rect x="1528" y="24" width="1" height="4" fill="#b4b7ba"/><rect x="1548" y="24" width="1" height="4" fill="#b4b7ba"/><rect x="1568" y="24" width="1" height="4" fill="#b4b7ba"/><rect x="1588" y="20" width="1" height="8" fill="#d8dadc"/><rect x="1608" y="24" width="1" height="4" fill="#b4b7ba"/><rect x="1628" y="24" width="1" height="4" fill="#b4b7ba"/><rect x="1648" y="24" width="1" height="4" fill="#b4b7ba"/><rect x="1668" y="24" width="1" height="4" fill="#b4b7ba"/><rect x="1688" y="20" width="1" height="8" fill="#d8dadc"/><rect x="1708" y="24" width="1" height="4" fill="#b4b7ba"/><rect x="1728" y="24" width="1" height="4" fill="#b4b7ba"/><rect x="1748" y="24" width="1" height="4" fill="#b4b7ba"/><rect x="1768" y="24" width="1" height="4" fill="#b4b7ba"/><rect x="1788" y="20" width="1" height="8" fill="#d8dadc"/><rect x="1808" y="24" width="1" height="4" fill="#b4b7ba"/><rect x="1828" y="24" width="1" height="4" fill="#b4b7ba"/><rect x="1848" y="24" width="1" height="4" fill="#b4b7ba"/><rect x="1868" y="24" width="1" height="4" fill="#b4b7ba"/><rect x="1888" y="20" width="1" height="8" fill="#d8dadc"/></svg>
<span class="t" id="t38" style="left:89.51px;top:603.67px;font-size:12.5px;color:#c0c3c7;font-weight:400;letter-spacing:0.000px;transform:scaleX(0.8780);transform-origin:0 0;">00:00:00:00</span>
<span class="t" id="t39" style="left:189.51px;top:603.67px;font-size:12.5px;color:#c0c3c7;font-weight:400;letter-spacing:0.000px;transform:scaleX(0.8780);transform-origin:0 0;">00:00:05:00</span>
<span class="t" id="t40" style="left:289.51px;top:603.67px;font-size:12.5px;color:#c0c3c7;font-weight:400;letter-spacing:0.000px;transform:scaleX(0.8780);transform-origin:0 0;">00:00:10:00</span>
<span class="t" id="t41" style="left:389.51px;top:603.67px;font-size:12.5px;color:#c0c3c7;font-weight:400;letter-spacing:0.000px;transform:scaleX(0.8780);transform-origin:0 0;">00:00:15:00</span>
<span class="t" id="t42" style="left:489.51px;top:603.67px;font-size:12.5px;color:#c0c3c7;font-weight:400;letter-spacing:0.000px;transform:scaleX(0.8780);transform-origin:0 0;">00:00:20:00</span>
<span class="t" id="t43" style="left:589.51px;top:603.67px;font-size:12.5px;color:#c0c3c7;font-weight:400;letter-spacing:0.000px;transform:scaleX(0.8780);transform-origin:0 0;">00:00:25:00</span>
<span class="t" id="t44" style="left:689.51px;top:603.67px;font-size:12.5px;color:#c0c3c7;font-weight:400;letter-spacing:0.000px;transform:scaleX(0.8780);transform-origin:0 0;">00:00:30:00</span>
<span class="t" id="t45" style="left:789.51px;top:603.67px;font-size:12.5px;color:#c0c3c7;font-weight:400;letter-spacing:0.000px;transform:scaleX(0.8780);transform-origin:0 0;">00:00:35:00</span>
<span class="t" id="t46" style="left:889.51px;top:603.67px;font-size:12.5px;color:#c0c3c7;font-weight:400;letter-spacing:0.000px;transform:scaleX(0.8780);transform-origin:0 0;">00:00:40:00</span>
<span class="t" id="t47" style="left:989.51px;top:603.67px;font-size:12.5px;color:#c0c3c7;font-weight:400;letter-spacing:0.000px;transform:scaleX(0.8780);transform-origin:0 0;">00:00:45:00</span>
<span class="t" id="t48" style="left:1089.51px;top:603.67px;font-size:12.5px;color:#c0c3c7;font-weight:400;letter-spacing:0.000px;transform:scaleX(0.8780);transform-origin:0 0;">00:00:50:00</span>
<span class="t" id="t49" style="left:1189.51px;top:603.67px;font-size:12.5px;color:#c0c3c7;font-weight:400;letter-spacing:0.000px;transform:scaleX(0.8780);transform-origin:0 0;">00:00:55:00</span>
<span class="t" id="t50" style="left:1289.51px;top:603.67px;font-size:12.5px;color:#c0c3c7;font-weight:400;letter-spacing:0.000px;transform:scaleX(0.8780);transform-origin:0 0;">00:01:00:00</span>
<span class="t" id="t51" style="left:1389.51px;top:603.67px;font-size:12.5px;color:#c0c3c7;font-weight:400;letter-spacing:0.000px;transform:scaleX(0.8780);transform-origin:0 0;">00:01:05:00</span>
<span class="t" id="t52" style="left:1489.51px;top:603.67px;font-size:12.5px;color:#c0c3c7;font-weight:400;letter-spacing:0.000px;transform:scaleX(0.8780);transform-origin:0 0;">00:01:10:00</span>
<span class="t" id="t53" style="left:1589.51px;top:603.67px;font-size:12.5px;color:#c0c3c7;font-weight:400;letter-spacing:0.000px;transform:scaleX(0.8780);transform-origin:0 0;">00:01:15:00</span>
<span class="t" id="t54" style="left:1689.51px;top:603.67px;font-size:12.5px;color:#c0c3c7;font-weight:400;letter-spacing:0.000px;transform:scaleX(0.8780);transform-origin:0 0;">00:01:20:00</span>
<span class="t" id="t55" style="left:1789.51px;top:603.67px;font-size:12.5px;color:#c0c3c7;font-weight:400;letter-spacing:0.000px;transform:scaleX(0.8780);transform-origin:0 0;">00:01:25:00</span>
<span class="t" id="t56" style="left:1889.51px;top:603.67px;font-size:12.5px;color:#c0c3c7;font-weight:400;letter-spacing:0.000px;transform:scaleX(0.8780);transform-origin:0 0;width:20.50px;overflow:hidden;">00:01:30:00</span>
<div class="b" style="left:0px;top:628px;width:1914px;height:104px;background:#151b24;"></div>
<div class="b" style="left:0px;top:732px;width:1914px;height:68px;background:#181f27;"></div>
<div class="b" style="left:0px;top:731px;width:1914px;height:1px;background:#11171e;"></div>
<div class="b" style="left:0px;top:800px;width:1914px;height:1px;background:#11171e;"></div>
<div class="b" style="left:0px;top:801px;width:1914px;height:107px;background:#151b24;"></div>
<div class="b" style="left:0px;top:908px;width:1914px;height:70px;background:#181f27;"></div>
<div class="b" style="left:0px;top:978px;width:1914px;height:55px;background:#212833;"></div>
<div class="b" style="left:0px;top:907px;width:1914px;height:1px;background:#11171e;"></div>
<div class="b" style="left:1914px;top:628px;width:6px;height:405px;background:#151b24;"></div>
<div class="b" style="left:0px;top:1033px;width:1920px;height:7px;background:#212833;"></div>
<div class="b" style="left:0px;top:1033px;width:1920px;height:6px;background:#131a23;border-radius:0 0 6px 6px;"></div>
<svg class="ic" style="left:7.00px;top:850.00px;color:#dcdddf;" width="10.00" height="8.00" viewBox="0 0 10 8"><rect width="10" height="8" rx=".5" fill="currentColor"/><path d="M3.300 2v4L7.100 4z" fill="#151b24"/></svg>
<svg class="ic" style="left:18.50px;top:850.30px;color:#9a9da2;" width="4.00" height="8.00" viewBox="0 0 4 8"><path d="M.6 2.500L2.600 .8V7.800" fill="none" stroke="currentColor" stroke-width="1.05"/></svg>
<svg class="ic" style="left:37.00px;top:848.50px;color:#e2e3e4;" width="10.00" height="11.00" viewBox="0 0 10 11"><rect x="1" y="5.400" width="8" height="5.100" rx=".4" fill="currentColor"/><path d="M2.400 5.400V3.400a2.350 2.350 0 0 1 4.600-.8" fill="none" stroke="currentColor" stroke-width="1.25"/></svg>
<svg class="ic" style="left:67.84px;top:850.09px;color:#e2e3e4;" width="11.31" height="7.83" viewBox="0 0 13 9"><path d="M.2 4.500C2 1.400 4.200.3 6.500.3s4.500 1.100 6.300 4.200C11 7.600 8.800 8.700 6.500 8.700S2 7.600.2 4.500z" fill="currentColor"/><circle cx="6.700" cy="4.300" r="2.400" fill="#151b24"/><circle cx="5.900" cy="3.600" r="1" fill="currentColor"/></svg>
<svg class="ic" style="left:7.65px;top:938.05px;color:#e2e3e4;" width="8.70" height="8.70" viewBox="0 0 10 10"><path d="M3 1.600L9.600 0v7.200a1.800 1.600 0 1 1-1.300-1.500V2.600L4.300 3.600v5a1.800 1.600 0 1 1-1.300-1.500z" fill="currentColor"/></svg>
<svg class="ic" style="left:18.50px;top:938.60px;color:#9a9da2;" width="4.00" height="8.00" viewBox="0 0 4 8"><path d="M.6 2.500L2.600 .8V7.800" fill="none" stroke="currentColor" stroke-width="1.05"/></svg>
<svg class="ic" style="left:37.00px;top:936.50px;color:#e2e3e4;" width="10.00" height="11.00" viewBox="0 0 10 11"><rect x="1" y="5.400" width="8" height="5.100" rx=".4" fill="currentColor"/><path d="M2.400 5.400V3.400a2.350 2.350 0 0 1 4.600-.8" fill="none" stroke="currentColor" stroke-width="1.25"/></svg>
<svg class="ic" style="left:67.50px;top:937.05px;color:#e2e3e4;" width="11.40" height="9.50" viewBox="0 0 12 10"><path d="M0 3.200h2.400L5.600.2v9.600L2.400 6.800H0z" fill="currentColor"/><path d="M7.200 3a2.600 2.600 0 0 1 0 4M8.800 1.200a5.200 5.200 0 0 1 0 7.600" fill="none" stroke="currentColor" stroke-width="1.100"/></svg>
<div class="b" style="left:87px;top:628px;width:1px;height:405px;background:#0c1016;opacity:.75;"></div>
<div class="b" style="left:88px;top:597px;width:1px;height:436px;background:#f4695c;"></div>
<div class="b" style="left:89px;top:597px;width:1px;height:436px;background:#f4695c;opacity:.22;"></div>
<svg class="ic" style="left:88px;top:597px" width="14" height="70" viewBox="88 597 14 70"><path d="M88 597h6.500v6L89.600 607.500H88z" fill="#f4695c"/><path d="M88 629h1.600a9.800 10.500 0 0 1 9.800 10.500v14a9.800 10.500 0 0 1-9.800 10.500H88z" fill="#f4695c"/><path d="M93.100 638L88.400 647.600L90.900 650.800" fill="none" stroke="#fbe9e6" stroke-width=".75"/><circle cx="94.600" cy="652.300" r="3.500" fill="none" stroke="#fbe9e6" stroke-width=".75"/></svg>
</body></html>
